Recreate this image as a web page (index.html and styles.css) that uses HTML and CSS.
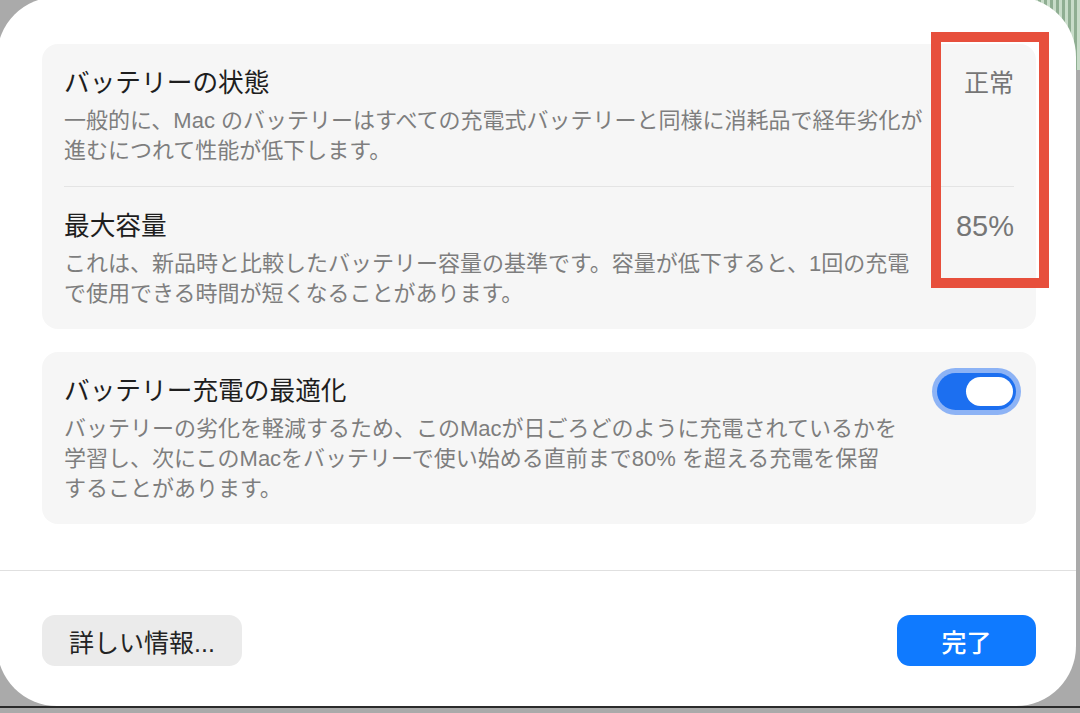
FILE: index.html
```html
<!DOCTYPE html>
<html lang="ja">
<head>
    <meta charset="UTF-8">
    <title>バッテリーの状態</title>
    <link rel="stylesheet" href="styles.css">
</head>
<body>
    <div class="dialog">
        <div class="content">
            <section class="card">
                <div class="row">
                    <div class="row-text">
                        <h3 class="title">バッテリーの状態</h3>
                        <p class="desc">一般的に、Mac のバッテリーはすべての充電式バッテリーと同様に消耗品で経年劣化が<br>進むにつれて性能が低下します。</p>
                    </div>
                    <div class="value">正常</div>
                </div>
                <div class="row">
                    <div class="row-text">
                        <h3 class="title">最大容量</h3>
                        <p class="desc">これは、新品時と比較したバッテリー容量の基準です。容量が低下すると、1回の充電<br>で使用できる時間が短くなることがあります。</p>
                    </div>
                    <div class="value num">85%</div>
                </div>
            </section>

            <section class="card">
                <div class="row">
                    <div class="row-text">
                        <h3 class="title">バッテリー充電の最適化</h3>
                        <p class="desc">バッテリーの劣化を軽減するため、このMacが日ごろどのように充電されているかを<br>学習し、次にこのMacをバッテリーで使い始める直前まで80% を超える充電を保留<br>することがあります。</p>
                    </div>
                    <div class="switch on"><span class="knob"></span></div>
                </div>
            </section>
        </div>

        <div class="footer">
            <button class="btn btn-secondary">詳しい情報...</button>
            <button class="btn btn-primary">完了</button>
        </div>
    </div>

    <!-- annotation drawn over the screenshot -->
    <div class="highlight"></div>
</body>
</html>
```

FILE: styles.css
```css
* {
    margin: 0;
    padding: 0;
    box-sizing: border-box;
    font-family: "Liberation Sans", "Noto Sans CJK JP", sans-serif;
}

html, body {
    height: 713px;
    overflow: hidden;
}

body {
    background:
        repeating-linear-gradient(90deg, #8fae92 0 3px, #c8dcc9 3px 6px) right top / 60px 70px no-repeat,
        #aaaaaa;
    color: #222;
}

body::after {
    content: "";
    position: absolute;
    left: 0;
    right: 0;
    top: 706px;
    height: 2px;
    background: #2b2b2b;
}

.dialog {
    margin: -3px 0 0 -3px;
    width: 1079px;
    height: 709px;
    background: #fff;
    border-radius: 60px;
    display: flex;
    flex-direction: column;
    overflow: hidden;
}

/* Cards */
.content {
    display: flex;
    flex-direction: column;
    gap: 23px;
    padding: 47px 40px 45px 45px;
}

.card {
    background: #f6f6f6;
    border-radius: 16px;
    padding: 0 22px;
}

.row {
    display: flex;
    align-items: flex-start;
    justify-content: space-between;
    padding: 22px 0 20px;
}

.row + .row {
    border-top: 1px solid #e4e4e4;
}

.row-text {
    flex: 1;
    min-width: 0;
}

.title {
    font-size: 25.7px;
    font-weight: 400;
    line-height: 34px;
    color: #1e1e1e;
}

.desc {
    margin-top: 6px;
    font-size: 22px;
    line-height: 30px;
    color: #7e7e7e;
    white-space: nowrap;
}

.value {
    flex: none;
    font-size: 25px;
    line-height: 34px;
    color: #767676;
}

.value.num {
    font-size: 29px;
}

/* Toggle */
.switch {
    position: relative;
    flex: none;
    width: 79px;
    height: 37px;
    margin: -1px -2px 0 0;
    border-radius: 19px;
    background: #d6d6d6;
}

.switch.on {
    background: #1c6ff0;
    box-shadow: 0 0 0 5px #8db3f5;
}

.knob {
    position: absolute;
    top: 4px;
    left: 3px;
    width: 47px;
    height: 29px;
    border-radius: 15px;
    background: #fff;
}

.switch.on .knob {
    left: auto;
    right: 3px;
}

/* Footer */
.footer {
    margin-top: auto;
    display: flex;
    justify-content: space-between;
    align-items: center;
    padding: 44px 40px 40px 45px;
    border-top: 1px solid #e0e0e0;
}

.btn {
    height: 51px;
    border: none;
    border-radius: 13px;
    font-size: 25px;
    cursor: pointer;
}

.btn-secondary {
    padding: 0 27px;
    background: #ebebeb;
    color: #232323;
}

.btn-primary {
    width: 139px;
    background: #0f7aff;
    color: #fff;
    font-weight: 500;
}

.highlight {
    position: absolute;
    left: 931px;
    top: 32px;
    width: 118px;
    height: 256px;
    border: 10px solid #e74f3c;
}
```
